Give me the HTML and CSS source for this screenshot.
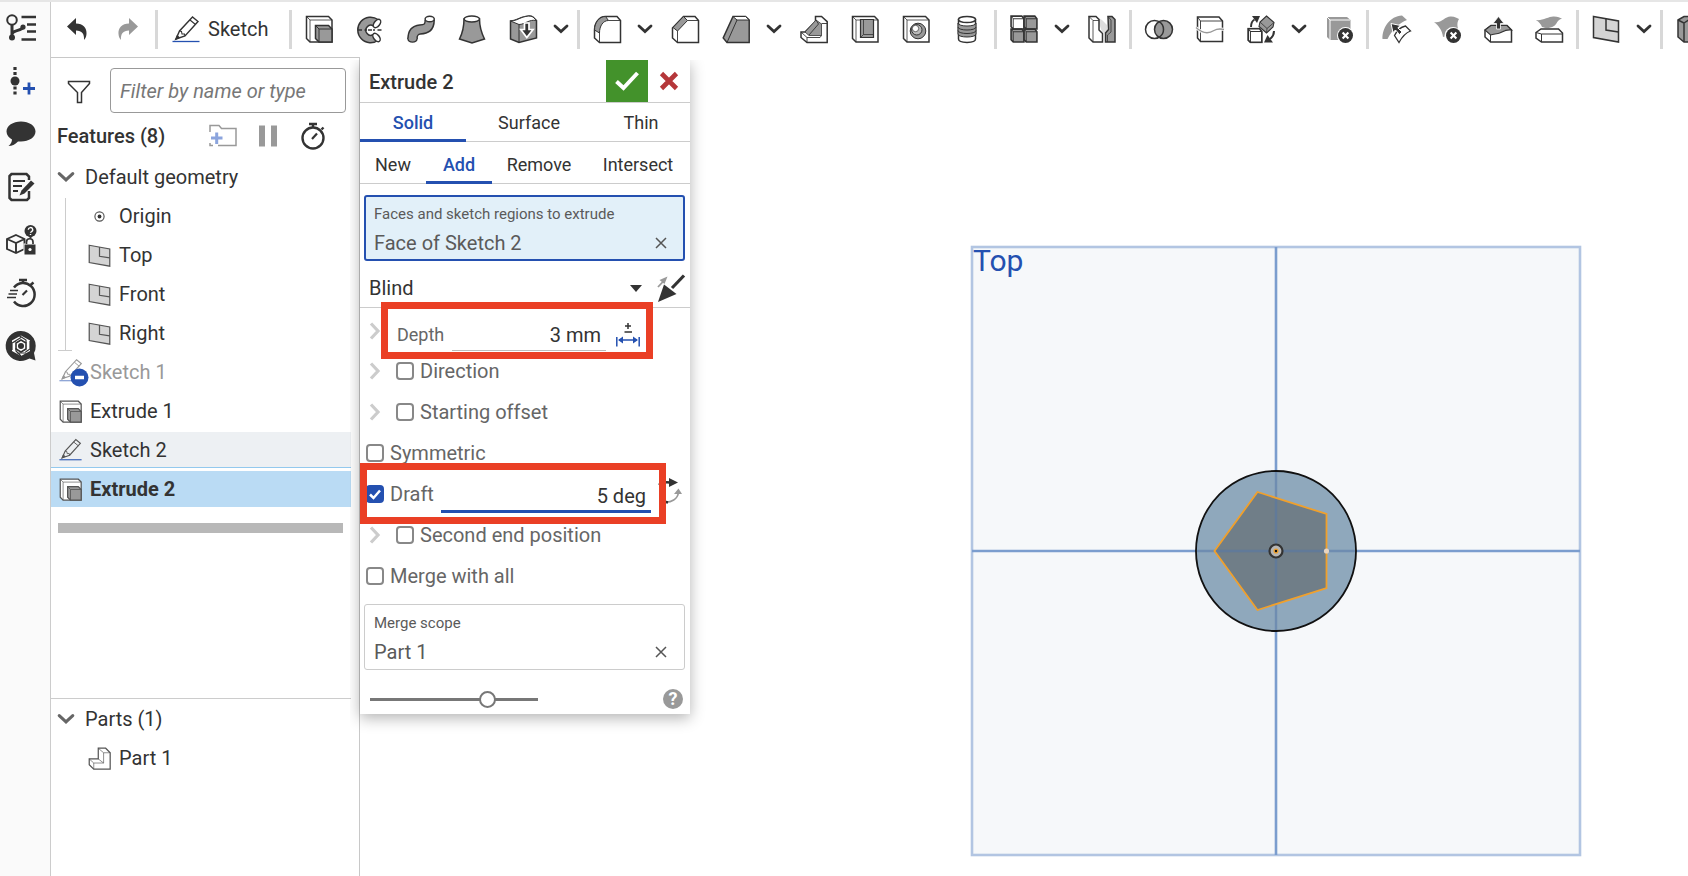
FILE: index.html
```html
<!DOCTYPE html>
<html lang="en">
<head>
<meta charset="utf-8">
<title>Extrude 2</title>
<link rel="stylesheet" href="styles.css">
</head>
<body>
<svg class="defs" aria-hidden="true">
  <symbol id="i-chev" viewBox="0 0 16 10"><path d="M2 2l6 5.500l6-5.500" fill="none" stroke="currentColor" stroke-width="2.800" stroke-linecap="round" stroke-linejoin="miter"/></symbol>
  <symbol id="i-extrude" viewBox="0 0 28 28">
    <path d="M1.500 1.500H23.500L27 5V27H5L1.500 23.500z" fill="#fff"/>
    <path d="M1.500 1.500L5 5V27M5 5H27" fill="none" stroke-width=".8"/>
    <path d="M10.500 10.500H23.500L27 14V27H14L10.500 23.500z" fill="#999"/>
    <path d="M10.500 10.500L14 14V27M14 14H27" fill="none" stroke-width="1"/>
  </symbol>
  <symbol id="i-pencil" viewBox="0 0 28 28">
    <path d="M4 24L7.500 16L20.500 2L26 6.500L13 21z" fill="none" stroke-width="1.400"/>
    <path d="M7.500 16L9.500 16.500L10 19L12.500 19L13 21M18 5L23.500 9.500" fill="none" stroke-width="1.100"/>
    <path d="M4 24l1.300-3l1.700 1.500z" fill="#333"/>
    <path d="M.5 26.500H27.500" stroke="#2450b0" stroke-width="1.300"/>
  </symbol>
  <symbol id="i-plane" viewBox="0 0 28 28">
    <path d="M1.500 1.500L26.500 6V27L1.500 22.500z" fill="#d4d4d4"/><path d="M14 3.800V15L26.500 17" fill="none"/>
  </symbol>
  <symbol id="i-delete" viewBox="0 0 14 14"><circle cx="7" cy="7" r="7" fill="#333" stroke="none"/><path d="M4.300 4.300l5.400 5.400M9.700 4.300L4.300 9.700" stroke="#fff" stroke-width="2"/></symbol>
  <symbol id="i-cube" viewBox="0 0 14 14"><path d="M1 1H11L13 3.500V13H3L1 11z"/><path d="M1 1L3 3.500V13M3 3.500H13" fill="none" stroke-width=".9"/></symbol>
</svg>
<div class="app">
  <nav class="rail" aria-label="Panels">
    <button type="button" aria-label="Feature list"><svg viewBox="0 0 30 30"><circle cx="6" cy="7" r="4.800" fill="none" stroke-width="2"/><circle cx="6" cy="24.500" r="3" fill="#333" stroke="none"/><circle cx="17" cy="14" r="2.600" fill="#333" stroke="none"/><path d="M6 12V24M6 21C7 17 11 19 17 15" fill="none" stroke-width="3"/><path d="M15.500 4H30M21 11.500H30M21 18.500H30M15.500 26.500H30" stroke-width="2.500"/></svg></button>
    <button type="button" aria-label="Insert feature"><svg viewBox="0 0 30 30"><circle cx="9" cy="15" r="4.500" fill="#333" stroke="none"/><path d="M9 1V9M9 20.500V29" stroke-width="3.200" stroke-dasharray="3 2"/><path d="M17 22.500H29M23 16.500V28.500" stroke="#2450b0" stroke-width="2.800"/></svg></button>
    <button type="button" aria-label="Comments"><svg viewBox="0 0 30 30"><path d="M15 2.500c8 0 14.500 4.300 14.500 10S23 22.500 15 22.500l-3-.1C9 25.500 6 27 2.500 27C5 25 6 22.500 6 20.500C3 18.800.5 16 .5 12.500C.5 6.800 7 2.500 15 2.500z" fill="#333" stroke="none"/></svg></button>
    <button type="button" aria-label="Notes"><svg viewBox="0 0 30 30"><path d="M23 8V4.500L20.500 2H5.500L3.500 4V26L5.500 28H21L23 26V19" fill="none" stroke-width="2.500"/><path d="M7 9H19M7 14H16M7 19H12" stroke-width="1.800"/><path d="M13.500 23.500l2-5L25 8.500l3.500 3L18.500 21.500z" fill="#333" stroke="none"/></svg></button>
    <button type="button" aria-label="Permissions"><svg viewBox="0 0 30 30"><path d="M10 10L18.500 14V24L10 28L1 24V14zM1 14L10 18L18.500 14M10 18V28" fill="none" stroke-width="1.900"/><rect x="18" y="19" width="12" height="11" fill="#333" stroke="#fafafa" stroke-width="1"/><path d="M20.500 19V17a3 3 0 0 1 6.500 0V19" fill="none" stroke-width="1.700"/><circle cx="24" cy="24.500" r="1.600" fill="#fff" stroke="none"/><circle cx="24.500" cy="6" r="6" fill="#333" stroke="none"/><path d="M22.300 4.800a2.200 2.200 0 1 1 3 2q-.8.300-.8 1M24.500 9V10" fill="none" stroke="#fff" stroke-width="1.400"/><path d="M22.500 11L24.500 14L26.500 11z" fill="#333" stroke="none"/></svg></button>
    <button type="button" aria-label="Performance"><svg viewBox="0 0 30 30"><path d="M8 9.500A11.500 11.500 0 1 1 8 23.500" fill="none" stroke-width="2.500"/><path d="M13 2H21M17 2V5M24.500 7L27.500 4.500" stroke-width="2.500"/><path d="M16.500 17L21 12.500" stroke-width="2.200"/><path d="M4 12.500H12M2.500 16H11M1 19.500H10" stroke-width="1.500"/></svg></button>
    <button type="button" aria-label="Assistant"><svg viewBox="0 0 30 30"><path d="M15 0a15 15 0 1 0 5 29l3.500-1.500L29.500 29.500L28 22A15 15 0 0 0 15 0z" fill="#333" stroke="none"/><path d="M15 4.500L24 9.500V20L15 25L6 20V9.500z" fill="#fff" stroke="none"/><path d="M15 9L20 12V18L15 21L10 18V12z" fill="none" stroke-width="1.600"/><path d="M6 12L15 6.500M13 4.500L20 9V12M24 10V18L19.500 21M20 22L11 22M15 25L10 20V17M6 19V12L10 10" fill="none" stroke-width="1.200"/><circle cx="15" cy="15" r="3" fill="#333" stroke="none"/></svg></button>
  </nav>

  <div class="main">
    <div class="toolbar" role="toolbar" aria-label="Features">
      <button type="button" aria-label="Undo"><svg viewBox="0 0 28 28"><path d="M4 11.500L13 3V8.500C20 8.500 24 13 23.500 19C23.200 22 22.500 23.500 21 25C21.500 19 19 15.500 13 15.500V20z" fill="#333" stroke="none"/></svg></button>
      <button type="button" aria-label="Redo"><svg viewBox="0 0 28 28"><path d="M24 11.500L15 3V8.500C8 8.500 4 13 4.500 19C4.800 22 5.500 23.500 7 25C6.500 19 9 15.500 15 15.500V20z" fill="#999" stroke="none"/></svg></button>
      <span class="sep"></span>
      <button type="button" class="sketch"><svg><use href="#i-pencil"/></svg>Sketch</button>
      <span class="sep"></span>
      <button type="button" aria-label="Extrude"><svg><use href="#i-extrude"/></svg></button>
      <button type="button" aria-label="Revolve"><svg viewBox="0 0 28 28"><path d="M22 4.500A12.800 12.800 0 1 0 22.500 25L17.500 19.500A5 5 0 1 1 17.500 11z" fill="#999"/><ellipse cx="21" cy="8.500" rx="2.800" ry="4.800" transform="rotate(38 21 8.500)" fill="#fff"/><ellipse cx="20.500" cy="22.500" rx="2.800" ry="4.800" transform="rotate(-38 20.500 22.500)" fill="#fff"/><path d="M2 15H28" stroke-dasharray="4 2.500"/><path d="M11 15H17" stroke="#fff" stroke-width="3"/><path d="M12 15H16"/></svg></button>
      <button type="button" aria-label="Sweep"><svg viewBox="0 0 28 28"><path d="M22.700 5C22.700 13 19 14 13 14.500C8 15 5.500 18 5.500 24" fill="none" stroke-width="10.500"/><ellipse cx="5.500" cy="24" rx="5.200" ry="3.800" fill="#333" stroke="none"/><path d="M22.700 4C22.700 13 19 14 13 14.500C8 15 5.500 18 5.500 24" fill="none" stroke="#999" stroke-width="7.600"/><ellipse cx="5.500" cy="24" rx="3.800" ry="2.400" fill="#999" stroke="none"/><ellipse cx="22.700" cy="4" rx="4.600" ry="2.800" fill="#fff"/></svg></button>
      <button type="button" aria-label="Loft"><svg viewBox="0 0 28 28"><path d="M6 4C6 12 5 17 1.500 24L14 28L26.500 24C23 17 21.500 12 21.500 4z" fill="#999"/><ellipse cx="13.800" cy="4" rx="7.700" ry="3" fill="#fff"/></svg></button>
      <button type="button" aria-label="Thicken"><svg viewBox="0 0 28 28"><path d="M1.500 6C6 6 9 4 13 2.500S22 .5 24 2L27.500 5.500V23L10 27.500L1.500 24z" fill="#999"/><path d="M1.500 6C6 6 9 4 13 2.500S22 .5 24 2L27.500 5.500C20 4 16 9.500 10 9.500z" fill="#fff" stroke-width="1"/><path d="M10 9.500V27.500" stroke-width="1"/><path d="M15.500 8H20V14.500H24L17.800 22.500L11.800 14.500H15.500z" fill="#333" stroke="#fff" stroke-width="1.700"/></svg></button>
      <button type="button" class="more" aria-label="More solids"><svg><use href="#i-chev"/></svg></button>
      <span class="sep"></span>
      <button type="button" aria-label="Fillet"><svg viewBox="0 0 28 28"><path d="M1.500 15C1.500 8 6 1.500 12.500 1.500H24L27.500 5.500V27.500H6.500L1.500 23z" fill="#fff"/><path d="M1.500 15C1.500 8 6 1.500 12.500 1.500L15.500 5.500C10 5.500 6.500 11 6.500 18z" fill="#999" stroke-width="1"/><path d="M6.500 18V27.500M15.500 5.500H27.500" stroke-width=".9"/></svg></button>
      <button type="button" class="more" aria-label="More fillets"><svg><use href="#i-chev"/></svg></button>
      <button type="button" aria-label="Chamfer"><svg viewBox="0 0 28 28"><path d="M1.500 13L12.500 1.500H24L27.500 5.500V27.500H6.500L1.500 23z" fill="#fff"/><path d="M2 12.500L12.500 1.500L16.500 5.500L6.500 16z" fill="#999" stroke-width="1"/><path d="M6.500 16V27.500M16.500 5.500H27.500" stroke-width=".9"/></svg></button>
      <button type="button" aria-label="Draft"><svg viewBox="0 0 28 28"><path d="M11 1.500H23.500L27.200 5V27.500H5L1.200 23z" fill="#999"/><path d="M11 1.500H23.500L27.200 5H15z" fill="#fff" stroke-width="1"/><path d="M15 5L5 27.500" stroke-width="1"/></svg></button>
      <button type="button" class="more" aria-label="More drafts"><svg><use href="#i-chev"/></svg></button>
      <button type="button" aria-label="Rib"><svg viewBox="0 0 28 28"><path d="M1 17L5 17L15.500 6.500V1.500H21.500L27.200 6.700V27.500H7L1 22.500z" fill="#fff"/><path d="M5 17L16 5L21.500 9V20.500H9z" fill="#999" stroke-width=".8"/><path d="M16 5L18.500 9L9 20M21.500 8.500H27M1 17L7 22.500V27M7 22.500H20L21.500 20.500" fill="none" stroke-width=".9"/></svg></button>
      <button type="button" aria-label="Shell"><svg viewBox="0 0 28 28"><path d="M1.500 1.500H23.500L27 5V27H5L1.500 23.500z" fill="#fff"/><path d="M1.500 1.500L5 5V27M5 5H27" fill="none" stroke-width=".8"/><path d="M9.500 4.500H22.500V22.500H9.500z" fill="#999" stroke-width="1.200"/><path d="M9.500 22.500L12.500 19.500H22.500M12.500 19.500V5" fill="none" stroke-width=".8"/></svg></button>
      <button type="button" aria-label="Hole"><svg viewBox="0 0 28 28"><path d="M1.500 1.500H23.500L27 5V27H5L1.500 23.500z" fill="#fff"/><path d="M1.500 1.500L5 5V27M5 5H27" fill="none" stroke-width=".8"/><circle cx="16" cy="16" r="7.800" fill="#999" stroke-width="1"/><circle cx="14.800" cy="14.800" r="5.200" fill="#bbb" stroke-width="1"/><circle cx="13.500" cy="13.500" r="3.200" fill="#fff" stroke-width=".7"/></svg></button>
      <button type="button" aria-label="Thread"><svg viewBox="0 0 28 28"><path d="M5.500 4.500V24C5.500 28.500 22.500 28.500 22.500 24V4.500z" fill="#fff"/><path d="M5 8C5 12 23 12 23 8V19C23 23 5 23 5 19z" fill="#999" stroke-width="1"/><path d="M5 12C5 16 23 16 23 12M5 15.500C5 19.500 23 19.500 23 15.500" fill="none" stroke-width="1"/><ellipse cx="14" cy="4.500" rx="8.500" ry="3" fill="#fff"/></svg></button>
      <span class="sep"></span>
      <button type="button" aria-label="Pattern"><svg viewBox="0 0 28 28"><use href="#i-cube" x="0" y="0" width="15" height="15" fill="#fff"/><use href="#i-cube" x="13" y="0" width="15" height="15" fill="#999"/><use href="#i-cube" x="0" y="13" width="15" height="15" fill="#999"/><use href="#i-cube" x="13" y="13" width="15" height="15" fill="#999"/></svg></button>
      <button type="button" class="more" aria-label="More patterns"><svg><use href="#i-chev"/></svg></button>
      <button type="button" aria-label="Mirror"><svg viewBox="0 0 28 28"><path d="M9 2L14 5L19 10V19L14 17z" fill="#ddd" stroke="none"/><path d="M1 1.500H8L11 4.500V15L14.500 18.500V27H5L1 23z" fill="#fff"/><path d="M1 1.500L5 5.500H11M5 5.500V27" fill="none" stroke-width=".8"/><path d="M20 1.500H24L27 4.500V27H17.500V18L20.500 14.500z" fill="#999"/><path d="M20 1.500L23 5V17L19.500 20V27" fill="none" stroke-width=".8"/></svg></button>
      <span class="sep"></span>
      <button type="button" aria-label="Boolean"><svg viewBox="0 0 28 28"><circle cx="9.500" cy="14.500" r="9" fill="#fff"/><circle cx="18.500" cy="14.500" r="9" fill="#999"/><path d="M14 6.700a9 9 0 0 1 0 15.600" fill="none"/></svg></button>
      <button type="button" aria-label="Split"><svg viewBox="0 0 28 28"><path d="M1.500 2H23L26.500 6V26.500H4.500L1.500 23z" fill="#fff"/><path d="M1.500 2L4.500 6V26.500M4.500 6H26.500" fill="none" stroke-width=".9"/><path d="M0 12.500C8 20 14 18 18 15.500S25 14 28 14.500" fill="none" stroke="#fff" stroke-width="3"/><path d="M0 12.500C8 20 14 18 18 15.500S25 14 28 14.500" fill="none" stroke="#999" stroke-width="1.400"/></svg></button>
      <button type="button" aria-label="Transform"><svg viewBox="0 0 28 28"><use href="#i-cube" x="0" y="12.500" width="16" height="16" fill="#fff"/><path d="M19.500 1L27 7.500L26 12L19.500 18L12 11.500L13 7z" fill="#999" stroke-width="1.100"/><path d="M13 7L20 13.500L27 7.500M20 13.500L19.500 18" fill="none" stroke-width=".8"/><path d="M4 12C4 8 5 6 7.500 4.500" fill="none" stroke-width="2"/><path d="M5 1H13L10 8z" fill="#333" stroke="none"/><path d="M27 16C27 20 25.500 22 23 24" fill="none" stroke-width="2"/><path d="M26 27.500H17L20.500 20z" fill="#333" stroke="none"/></svg></button>
      <button type="button" class="more" aria-label="More transforms"><svg><use href="#i-chev"/></svg></button>
      <button type="button" aria-label="Delete part"><svg viewBox="0 0 28 28"><path d="M2 2H22L25.500 5V25H5L2 22z" fill="#999" stroke="none"/><path d="M2 2L5 5V25M5 5H25" fill="none" stroke="#fff" stroke-width="1"/><circle cx="20.500" cy="20.500" r="8.500" fill="#fff" stroke="none"/><use href="#i-delete" x="13" y="13" width="15" height="15"/></svg></button>
      <span class="sep"></span>
      <button type="button" aria-label="Modify fillet"><svg viewBox="0 0 28 28"><path d="M.5 24C0 13 8 1 20 .5L25 5C17 8 10 15 5.500 24z" fill="#999" stroke="none"/><path d="M12.500 20.500C15 15 19 12 23.500 11L28.500 16C23 18 20 22 17 27.500z" fill="#fff" stroke-width="1.300"/><path d="M9 8.500L18.500 10.500L15.800 12.800L20 17L17.500 19.500L13.500 15L11 17.500z" fill="#333" stroke="#fff" stroke-width="1"/></svg></button>
      <button type="button" aria-label="Delete face"><svg viewBox="0 0 28 28"><path d="M1 7C8 9 12 1 18 1.500C22 1.500 24 3 26 4C23 9 25 13 26 17L10 22C9 15 6 11 1 7z" fill="#999" stroke="none"/><circle cx="20" cy="20.500" r="8.500" fill="#fff" stroke="none"/><use href="#i-delete" x="13" y="13" width="15" height="15"/></svg></button>
      <button type="button" aria-label="Move face"><svg viewBox="0 0 28 28"><path d="M1 15L7 10.500L23 10.500L27.500 15V27H6.500L1 22z" fill="#fff"/><path d="M1 15L7 10.500H23L27.500 15C20 14 18 18 14 18.500C10 19 8 19.500 6.500 20z" fill="#999" stroke-width="1.100"/><path d="M6.500 20V27" stroke-width="1"/><path d="M14.500 1.500L20 8.500H16.500V14H12.500V8.500H9z" fill="#333" stroke="#fff" stroke-width=".8"/></svg></button>
      <button type="button" aria-label="Replace face"><svg viewBox="0 0 28 28"><path d="M1 5C8 6 14 1 19 1.500C23 1.500 25 3 27 3.500C22 5 22 9 19 11C14 14 10 13 7 12C6 9 4 7 1 5z" fill="#999" stroke="none"/><path d="M1 17.500L6 14H23.500L27.500 18V27H6.500L1 23z" fill="#fff"/><path d="M1 17.500L6.500 19H27M6.500 19V27" fill="none" stroke-width="1"/></svg></button>
      <span class="sep"></span>
      <button type="button" aria-label="Plane"><svg><use href="#i-plane"/></svg></button>
      <button type="button" class="more" aria-label="More planes"><svg><use href="#i-chev"/></svg></button>
      <span class="sep"></span>
      <button type="button" aria-label="Frame"><svg viewBox="0 0 28 28"><path d="M2 5L8 1.500H24V27H8L2 22z" fill="#999"/><path d="M2 5L8 8V27M8 8L14 4" fill="none"/></svg></button>
    </div>

    <div class="workspace">
      <aside class="panel">
        <section class="features">
          <div class="filter">
            <svg viewBox="0 0 24 24" aria-hidden="true"><path d="M1.500 1.500H22.500V3.500L14.500 12.500V22.500H10.500V12.500L1.500 3.500z" fill="none"/></svg>
            <input type="text" placeholder="Filter by name or type" aria-label="Filter by name or type">
          </div>
          <div class="heading">
            <h2>Features (8)</h2>
            <button type="button" aria-label="Add folder"><svg viewBox="0 0 28 24"><path d="M1 8V1.500H10L12.500 4.500H27V21.500H9M1 19V21.500H4" fill="none" stroke="#999"/><path d="M2 14H13.500M7.700 8.500V20" stroke="#8ba4dd" stroke-width="3"/></svg></button>
            <button type="button" aria-label="Suspend"><svg viewBox="0 0 28 24"><path d="M5 1.500H11V22.500H5zM17 1.500H23V22.500H17z" fill="#999" stroke="none"/></svg></button>
            <button type="button" aria-label="Regeneration times"><svg viewBox="0 0 28 28"><circle cx="14" cy="16" r="10.500" fill="none" stroke-width="2.400"/><path d="M10 2H18M14 2V5M22.500 7.500L24.500 5.500" stroke-width="2.400"/><path d="M13 17L18 11.500" stroke-width="2.200"/></svg></button>
          </div>
          <ul class="tree">
            <li><div class="row group"><svg class="chev"><use href="#i-chev"/></svg>Default geometry</div>
              <ul class="children">
                <li class="row"><svg viewBox="0 0 24 24"><circle cx="12" cy="12" r="4.800" fill="none" stroke-width="1.200"/><circle cx="12" cy="12" r="2" fill="#333" stroke="none"/></svg>Origin</li>
                <li class="row"><svg><use href="#i-plane"/></svg>Top</li>
                <li class="row"><svg><use href="#i-plane"/></svg>Front</li>
                <li class="row"><svg><use href="#i-plane"/></svg>Right</li>
              </ul>
            </li>
            <li class="row muted"><svg viewBox="0 0 28 28"><g opacity=".6"><use href="#i-pencil" width="24" height="24"/></g><circle cx="20.500" cy="19.500" r="9" fill="#2450b0" stroke="none"/><path d="M16 19.500H25" stroke="#fff" stroke-width="3.500"/></svg>Sketch 1</li>
            <li class="row"><svg><use href="#i-extrude"/></svg>Extrude 1</li>
            <li class="row related"><svg><use href="#i-pencil"/></svg>Sketch 2</li>
            <li class="row current"><svg><use href="#i-extrude"/></svg>Extrude 2</li>
          </ul>
          <hr class="rollback">
        </section>
        <section class="parts">
          <ul class="tree">
            <li class="row group"><svg class="chev"><use href="#i-chev"/></svg>Parts (1)</li>
            <li><ul><li class="row part"><svg viewBox="0 0 28 28"><path d="M1.500 14.500H12.500V1.500H21.500L27 7V27H7L1.500 21.500z" fill="#fff"/><path d="M1.500 14.500L7 19.500V27M7 19.500H19V7H27M12.500 1.500L19 7M12.500 14.500L19 19.500" fill="none" stroke-width=".8"/></svg>Part 1</li></ul></li>
          </ul>
        </section>
      </aside>

      <main class="viewport">
        <form class="dialog" aria-label="Extrude 2">
          <header>
            <h1>Extrude 2</h1>
            <button type="button" class="accept" aria-label="Accept"><svg viewBox="0 0 28 28"><path d="M3.500 14.500L10.500 21L24.500 6" fill="none" stroke="#fff" stroke-width="4"/></svg></button>
            <button type="button" class="cancel" aria-label="Cancel"><svg viewBox="0 0 28 28"><path d="M6.500 6.500L21.500 21.500M21.500 6.500L6.500 21.500" stroke="#b5373a" stroke-width="4.600"/></svg></button>
          </header>
          <div class="tabs kinds">
            <button type="button" class="on">Solid</button><button type="button">Surface</button><button type="button">Thin</button>
          </div>
          <div class="tabs ops">
            <button type="button">New</button><button type="button" class="on">Add</button><button type="button">Remove</button><button type="button">Intersect</button>
          </div>
          <div class="picker active">
            <span class="caption">Faces and sketch regions to extrude</span>
            <div class="pick">Face of Sketch 2<button type="button" aria-label="Remove Face of Sketch 2"><svg viewBox="0 0 14 14"><path d="M2 2L12 12M12 2L2 12"/></svg></button></div>
          </div>
          <div class="end-type">
            <select aria-label="End type"><option>Blind</option></select>
            <svg class="caret" viewBox="0 0 12 7" aria-hidden="true"><path d="M0 0H12L6 7z" fill="#333" stroke="none"/></svg>
            <button type="button" aria-label="Opposite direction"><svg viewBox="0 0 28 28"><path d="M1 13L8 5.500" stroke="#999" stroke-width="1.800"/><path d="M10.500 2.500L2.500 6L7.500 10z" fill="#999" stroke="none"/><path d="M27 1.500L15 14" stroke-width="3.200"/><path d="M1 28L7 10.500L19.500 20z" fill="#333" stroke="none"/></svg></button>
          </div>
          <div class="opt depth">
            <svg class="arrow" viewBox="0 0 12 18"><path d="M2 1.500L9 9L2 16.500" fill="none" stroke="#ccc" stroke-width="3.200"/></svg>
            <label for="depth">Depth</label><input type="text" id="depth" value="3 mm">
            <svg class="measure" viewBox="0 0 24 24"><path d="M12 0V6M9 3H15M8.500 9H16" stroke-width="1.500"/><g stroke="#2450b0" fill="#2450b0"><path d="M.8 14V23.500M23.200 14V23.500M3 17H21" stroke-width="1.500"/><path d="M2 17L7 13.500V20.500zM22 17L17 13.500V20.500z" stroke="none"/></g></svg>
            <span class="mark"></span>
          </div>
          <div class="opt"><svg class="arrow" viewBox="0 0 12 18"><path d="M2 1.500L9 9L2 16.500" fill="none" stroke="#ccc" stroke-width="3.200"/></svg><label><input type="checkbox">Direction</label></div>
          <div class="opt"><svg class="arrow" viewBox="0 0 12 18"><path d="M2 1.500L9 9L2 16.500" fill="none" stroke="#ccc" stroke-width="3.200"/></svg><label><input type="checkbox">Starting offset</label></div>
          <div class="opt flat"><label><input type="checkbox">Symmetric</label></div>
          <div class="opt flat draft">
            <label><input type="checkbox" checked>Draft</label><input type="text" value="5 deg" aria-label="Draft angle">
            <svg class="swap" viewBox="0 0 28 28"><path d="M5 7C8 4 12 4 16 4.500" fill="none" stroke-width="2.500"/><path d="M15 0L24 4.500L15 9z" fill="#333" stroke="none"/><path d="M10 24C17 25 24 21 24.500 14" fill="none" stroke="#999" stroke-width="1.600"/><path d="M20 16L24.500 10.500L28 16z" fill="#999" stroke="none"/><path d="M8 23L14 24.500" stroke-width="2.500"/></svg>
            <span class="mark"></span>
          </div>
          <div class="opt"><svg class="arrow" viewBox="0 0 12 18"><path d="M2 1.500L9 9L2 16.500" fill="none" stroke="#ccc" stroke-width="3.200"/></svg><label><input type="checkbox">Second end position</label></div>
          <div class="opt flat"><label><input type="checkbox">Merge with all</label></div>
          <div class="picker scope">
            <span class="caption">Merge scope</span>
            <div class="pick">Part 1<button type="button" aria-label="Remove Part 1"><svg viewBox="0 0 14 14"><path d="M2 2L12 12M12 2L2 12"/></svg></button></div>
          </div>
          <footer>
            <input type="range" min="0" max="100" value="72" aria-label="Preview opacity">
            <button type="button" class="help" aria-label="Help">?</button>
          </footer>
        </form>

        <svg class="plane" viewBox="0 0 612 612" role="img" aria-label="Top plane">
          <rect x="2" y="2" width="608" height="608" fill="#f6f8fa" stroke="#b2c5e2" stroke-width="2.600"/>
          <path d="M306 2V610M2 306H610" stroke="#7b9dce" stroke-width="2.600"/>
          <text x="3" y="26">Top</text>
          <circle cx="306" cy="306" r="80" fill="#8fa8bc" stroke="#111" stroke-width="1.800"/>
          <path d="M287.500 247L356.500 269V343L287.500 365L244.500 306z" fill="#707e88"/>
          <path d="M306 227V385M227 306H385" stroke="#5577a8" stroke-opacity=".55" stroke-width="2.400"/>
          <path d="M287.500 247L356.500 269V343L287.500 365L244.500 306z" fill="none" stroke="#f0a02c" stroke-width="1.800"/>
          <circle cx="356.500" cy="306" r="2.600" fill="#e8d4c0"/>
          <circle cx="306" cy="306" r="6.500" fill="#b5b5b5" stroke="#333" stroke-width="2.200"/>
          <circle cx="306" cy="306" r="1.900" fill="#111" stroke="#f0a02c" stroke-width="1.300"/>
        </svg>
      </main>
    </div>
  </div>
</div>
</body>
</html>
```
FILE: styles.css
```css
* { box-sizing: border-box; }
body { margin: 0; font: 20px/24px Roboto, "Liberation Sans", sans-serif; color: #333; background: #fff; }
h1, h2, ul { margin: 0; padding: 0; list-style: none; font: inherit; }
button { display: flex; align-items: center; justify-content: center; padding: 0; border: 0; background: none; color: inherit; font: inherit; }
svg { flex: none; overflow: visible; stroke: #333; stroke-width: 1.5; }
.defs { position: absolute; width: 0; height: 0; }
.app { display: flex; height: 100vh; border-top: 2px solid #e6e6e6; overflow: hidden; }

.rail { flex: none; width: 51px; background: #fafafa; border-right: 1px solid #ccc; }
.rail button { width: 41px; height: 53px; }
.rail button:first-child { height: 52px; }
.rail svg { width: 30px; height: 30px; }

.main { flex: 1; min-width: 0; display: flex; flex-direction: column; }
.toolbar { flex: none; display: flex; align-items: center; height: 55px; padding-bottom: 1px; overflow: hidden; }
.toolbar button { flex: none; width: 51px; height: 44px; }
.toolbar svg { width: 28px; height: 28px; }
.toolbar .more { width: 25px; margin-right: 2px; }
.toolbar .more svg { width: 16px; height: 10px; }
.toolbar .sketch { width: 128px; padding-left: 13px; gap: 8px; justify-content: flex-start; }
.sep { flex: none; width: 3px; height: 39px; margin: 0 1px 0 2px; background: #d8d8d8; }

.workspace { flex: 1; min-height: 0; display: flex; }
.panel { flex: none; width: 309px; display: flex; flex-direction: column; border-top: 1px solid #c8c8c8; border-right: 1px solid #c8c8c8; }
.features { flex: 1; }
.filter { display: flex; align-items: center; gap: 19px; padding: 10px 13px 0 16px; }
.filter svg { width: 24px; height: 24px; margin-top: 2px; }
.filter input { flex: 1; min-width: 0; height: 45px; padding: 0 9px; border: 1px solid #999; border-radius: 4px; font: inherit; background: #fff; }
.filter input::placeholder { color: #777; font-style: italic; opacity: 1; }
.heading { display: flex; align-items: center; height: 46px; padding: 0 32px 0 6px; }
.heading h2 { flex: 1; font-weight: 500; }
.heading button { width: 28px; margin-left: 17px; }
.heading svg { width: 28px; height: 24px; }
.heading button:last-child svg { height: 28px; }

.tree .row { display: flex; align-items: center; gap: 8px; height: 36px; margin: 0 8px 3px 0; padding-left: 8px; }
.tree .row svg { width: 23px; height: 23px; stroke: #555; }
.tree .group { padding-left: 6px; gap: 10px; }
.tree .group svg { width: 18px; height: 12px; color: #666; }
.children { position: relative; }
.children::before { content: ""; position: absolute; left: 14px; top: 0; bottom: 0; border-left: 1px solid #ccc; }
.children::after { content: ""; position: absolute; left: 7px; bottom: 0; width: 14px; border-top: 1px solid #ccc; }
.tree .children .row, .tree .part { padding-left: 37px; }
.tree .muted { color: #999; }
.tree .muted svg { width: 28px; height: 28px; margin-right: -5px; }
.tree .related { background: #edf0f3; border-bottom: 1px solid #93c9ee; }
.tree .current { background: #badbf4; font-weight: 700; }
.rollback { height: 10px; margin: 16px 16px 0 7px; border: 0; background: #b8b8b8; }
.parts { min-height: 178px; margin-right: 8px; padding-top: 2px; border-top: 1px solid #ccc; }

.viewport { flex: 1; min-width: 0; display: flex; justify-content: space-between; align-items: flex-start; padding: 3px 106px 0 0; }
.dialog { flex: none; width: 330px; background: #fff; box-shadow: 0 4px 14px rgba(0, 0, 0, .3); clip-path: inset(0 -20px -30px -10px); }
.dialog header { display: flex; height: 43px; border-bottom: 1px solid #ccc; }
.dialog h1 { flex: 1; padding-left: 9px; font-weight: 500; line-height: 44px; }
.dialog header button { width: 42px; height: 42px; }
.dialog header svg { width: 28px; height: 28px; }
.accept { background: #43922b; }
.tabs { display: flex; border-bottom: 1px solid #ccc; font-size: 18px; }
.tabs button { padding-top: 4px; border-bottom: 3px solid transparent; margin-bottom: -1px; }
.tabs .on { border-color: #2450b0; color: #2450b0; font-weight: 500; }
.kinds { height: 39px; }
.kinds button { width: 106px; }
.kinds button:nth-child(2) { flex: 1; }
.kinds button:last-child { width: 98px; }
.ops { height: 42px; }
.ops button { width: 66px; padding-top: 6px; }
.ops button:nth-child(3) { flex: 1; }
.ops button:last-child { width: 104px; }

.picker { height: 66px; margin: 11px 5px 0 4px; padding: 6px 16px 0 9px; border: 1px solid #ccc; border-radius: 3px; color: #5a5a5a; }
.picker.active { border: 2px solid #2450b0; background: #e2f0f9; padding: 5px 15px 0 8px; }
.picker.scope { margin-top: 8px; }
.caption { display: block; font-size: 15px; }
.pick { display: flex; justify-content: space-between; align-items: center; height: 34px; }
.pick svg { width: 14px; height: 14px; stroke: #555; }

.end-type { display: flex; align-items: center; height: 47px; padding: 8px 5px 0 9px; border-bottom: 1px solid #ccc; }
.end-type select { flex: 1; height: 34px; padding: 0; border: 0; background: none; appearance: none; font: inherit; color: inherit; }
.caret { width: 12px; height: 7px; margin-right: 15px; }
.end-type button svg { width: 28px; height: 28px; }

.opt { position: relative; display: flex; align-items: center; height: 41px; padding-left: 9px; color: #666; }
.opt.flat { padding-left: 6px; }
.opt label { display: flex; align-items: center; gap: 6px; }
.arrow { width: 12px; height: 18px; margin-right: 15px; }
.opt input[type="checkbox"] { appearance: none; width: 18px; height: 18px; margin: 0; border: 2px solid #888; border-radius: 4px; background: #fff; }
.opt input[type="checkbox"]:checked { border-color: #2450b0; background: #2450b0 url("data:image/svg+xml,%3Csvg xmlns='http://www.w3.org/2000/svg' viewBox='0 0 14 14'%3E%3Cpath d='M2 7.500l3.500 3.500L12 3.500' fill='none' stroke='white' stroke-width='2.500'/%3E%3C/svg%3E") center / 14px no-repeat; }
.opt input[type="text"] { min-width: 0; border: 0; background: none; font: inherit; color: #333; text-align: right; padding: 0 5px 0 0; }
.opt.depth { height: 42px; }
.depth .arrow { margin-top: 4px; }
.depth label { width: 55px; margin-left: 1px; padding-top: 12px; font-size: 18px; }
.depth input[type="text"] { width: 154px; height: 32px; margin-top: 12px; border-bottom: 1px solid #bbb; }
.measure { width: 24px; height: 24px; margin: 12px 0 0 10px; }
.mark { position: absolute; inset: -6px 37px -9px 21px; border: 7px solid #ea3f25; pointer-events: none; }
.draft input[type="text"] { width: 210px; height: 36px; margin: 2px 11px 0 auto; padding-top: 6px; border-bottom: 3px solid #2450b0; }
.swap { width: 28px; height: 28px; margin: -4px 0 0 -8px; }
.opt.draft { padding-right: 8px; }
.draft .mark { inset: -10px 24px -10px 0; }

.dialog footer { display: flex; align-items: center; justify-content: space-between; height: 44px; padding: 14px 7px 0 10px; }
.dialog input[type="range"] { appearance: none; width: 168px; height: 18px; margin: 0; background: linear-gradient(#777, #777) center / 100% 3px no-repeat; }
.dialog input[type="range"]::-webkit-slider-thumb { appearance: none; width: 17px; height: 17px; border: 2px solid #777; border-radius: 50%; background: #fff; }
.help { width: 20px; height: 20px; border-radius: 50%; background: #999; color: #fff; font-size: 18px; font-weight: 700; line-height: 20px; }

.plane { flex: 0 1 612px; height: 612px; margin-top: 185px; stroke: none; }
.plane text { font: 30px Roboto, "Liberation Sans", sans-serif; fill: #2450b0; }
```
